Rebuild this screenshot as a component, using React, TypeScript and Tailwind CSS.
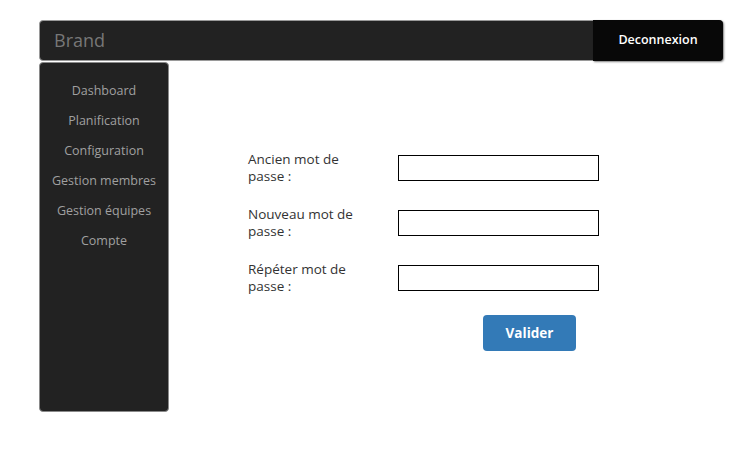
const menu = [
  "Dashboard",
  "Planification",
  "Configuration",
  "Gestion membres",
  "Gestion équipes",
  "Compte",
];

const fields = ["Ancien mot de passe :", "Nouveau mot de passe :", "Répéter mot de passe :"];

export default function App() {
  return (
    <div className="w-[753px] h-[469px] bg-white pt-[20px] pl-[39px] font-['Open_Sans',sans-serif]">
      <div className="w-[684px] h-[41px] flex items-stretch bg-[#222222] border border-[#9a9a9a] rounded-[4px]">
        <div className="flex-1 flex items-center pl-[14px] text-[18px] text-[#777777]">Brand</div>
        <button className="w-[130px] -mr-px -my-px bg-[#080808] text-white text-[12.5px] font-semibold rounded-r-[4px] shadow-[1px_1px_2px_rgba(0,0,0,0.5)]">
          Deconnexion
        </button>
      </div>
      <div className="flex mt-px">
        <div className="w-[130px] h-[350px] bg-[#222222] border border-[#8a8a8a] rounded-[4px] pt-[13px] flex flex-col items-center">
          {menu.map((m) => (
            <div key={m} className="h-[30px] flex items-center text-[12.5px] text-[#a0a0a0]">
              {m}
            </div>
          ))}
        </div>
        <div className="pl-[79px] pt-[93px] flex flex-col">
          {fields.map((f) => (
            <div key={f} className="flex items-start h-[55px]">
              <label className="w-[150px] -mt-[4px] text-[13.5px] leading-[17px] text-[#333333]">
                <span className="block w-[125px]">{f}</span>
              </label>
              <input className="w-[201px] h-[26px] border border-black bg-white" />
            </div>
          ))}
          <div className="pl-[235px] -mt-[5px]">
            <button className="w-[93px] h-[36px] bg-[#337ab7] text-white font-bold text-[13.5px] rounded-[4px]">
              Valider
            </button>
          </div>
        </div>
      </div>
    </div>
  );
}
